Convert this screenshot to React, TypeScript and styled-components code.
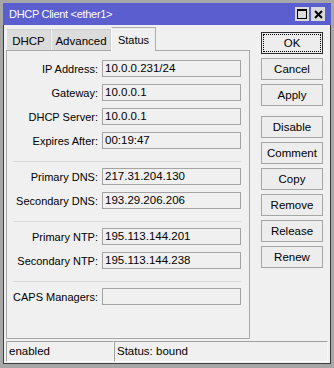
import * as React from 'react';
import styled, { createGlobalStyle } from 'styled-components';

const GlobalStyle = createGlobalStyle`
	html, body {
		margin: 0;
		padding: 0;
		background: #a7a7a7;
	}
	body {
		font-family: "Liberation Sans", Arial, sans-serif;
		font-size: 11px;
		color: #000;
	}
	#root {
		width: 334px;
		height: 368px;
		padding: 3px;
		box-sizing: border-box;
	}
`;

const Window = styled.div`
	width: 328px;
	height: 361px;
	box-sizing: border-box;
	background: #f0f0f0;
	border: 1px solid #3d3d3d;
	border-top: none;
	display: flex;
	flex-direction: column;
`;

const TitleBar = styled.div`
	flex: none;
	height: 22px;
	margin: 0 -1px;
	padding: 0 6px;
	background: #5a5ecf;
	color: #fff;
	display: flex;
	align-items: center;
`;

const Title = styled.div`
	flex: 1;
	font-size: 11px;
	letter-spacing: -0.3px;
`;

const TitleButtons = styled.div`
	display: flex;
	gap: 2px;
`;

const TitleButton = styled.div`
	width: 14px;
	height: 14px;
	background: #dadada;
	display: flex;
	align-items: center;
	justify-content: center;
`;

const Main = styled.div`
	flex: none;
	height: 314px;
	box-sizing: border-box;
	padding: 2px 0 0 2px;
	display: flex;
`;

const LeftColumn = styled.div`
	width: 244px;
	display: flex;
	flex-direction: column;
`;

const TabStrip = styled.div`
	height: 24px;
	margin-bottom: -1px;
	display: flex;
	align-items: flex-end;
	position: relative;
	z-index: 1;
`;

const Tab = styled.div<{ $active?: boolean; $w: number }>`
	width: ${p => p.$w}px;
	box-sizing: border-box;
	height: ${p => (p.$active ? 24 : 21)}px;
	margin-bottom: ${p => (p.$active ? 0 : 1)}px;
	display: flex;
	align-items: center;
	justify-content: center;
	padding-top: ${p => (p.$active ? 0 : 1)}px;
	font-size: ${p => (p.$active ? 11 : 11.5)}px;
	background: ${p => (p.$active ? '#f0f0f0' : '#dcdcdc')};
	border: 1px solid ${p => (p.$active ? '#adadad' : '#d0d0d0')};
	border-bottom: none;
	border-left-color: ${p => (p.$active ? '#ffffff' : '#f4f4f4')};
`;

const Panel = styled.div`
	height: 289px;
	box-sizing: border-box;
	border: 1px solid #a9a9a9;
	padding-top: 9px;
`;

const Group = styled.div`
	display: flex;
	flex-direction: column;
	gap: 7px;
`;

const Separator = styled.div`
	height: 1px;
	margin: 12px 0 6px 6px;
	width: 228px;
	background: #d9d9d9;
`;

const Row = styled.div`
	display: flex;
	align-items: center;
	height: 17px;
`;

const Label = styled.div`
	width: 91px;
	padding-right: 4px;
	text-align: right;
	white-space: nowrap;
`;

const Field = styled.div`
	width: 139px;
	height: 17px;
	box-sizing: border-box;
	border: 1px solid #a3a3a3;
	background: #f0f0f0;
	padding-left: 2px;
	line-height: 15px;
	font-size: 11.5px;
	white-space: nowrap;
`;

const ButtonColumn = styled.div`
	margin: 5px 0 0 11px;
	display: flex;
	flex-direction: column;
	gap: 4px;
`;

const Button = styled.div<{ $default?: boolean; $gapBefore?: boolean }>`
	position: relative;
	width: 62px;
	height: 22px;
	box-sizing: border-box;
	margin-top: ${p => (p.$gapBefore ? 6 : 0)}px;
	border: 1px solid ${p => (p.$default ? '#2f2f2f' : '#a6a6a6')};
	background: #ededed;
	display: flex;
	align-items: center;
	justify-content: center;
	font-size: 11.5px;

	${p =>
		p.$default &&
		`&::after {
			content: '';
			position: absolute;
			inset: 1px;
			border: 1px dotted #000;
		}`}
`;

const StatusBar = styled.div`
	flex: none;
	height: 21px;
	margin: 2px 2px 1px 2px;
	display: flex;
`;

const StatusCell = styled.div<{ $w?: number }>`
	${p => (p.$w ? `width: ${p.$w}px;` : 'flex: 1;')}
	box-sizing: border-box;
	border-top: 1px solid #a0a0a0;
	border-left: 1px solid #a0a0a0;
	border-right: 1px solid #fafafa;
	border-bottom: 1px solid #fafafa;
	padding-left: 2px;
	line-height: 19px;
	font-size: 11.5px;
`;

const groups = [
	[
		['IP Address:', '10.0.0.231/24'],
		['Gateway:', '10.0.0.1'],
		['DHCP Server:', '10.0.0.1'],
		['Expires After:', '00:19:47']
	],
	[
		['Primary DNS:', '217.31.204.130'],
		['Secondary DNS:', '193.29.206.206']
	],
	[
		['Primary NTP:', '195.113.144.201'],
		['Secondary NTP:', '195.113.144.238']
	],
	[['CAPS Managers:', '']]
];

const buttons = ['OK', 'Cancel', 'Apply', 'Disable', 'Comment', 'Copy', 'Remove', 'Release', 'Renew'];

const App = () => (
	<>
		<GlobalStyle />
		<Window>
			<TitleBar>
				<Title>DHCP Client &lt;ether1&gt;</Title>
				<TitleButtons>
					<TitleButton>
						<svg width="10" height="10" viewBox="0 0 10 10">
							<rect x="0.5" y="0.5" width="9" height="9" fill="none" stroke="#000" />
							<rect x="0" y="0" width="10" height="2" fill="#000" />
						</svg>
					</TitleButton>
					<TitleButton>
						<svg width="9" height="9" viewBox="0 0 9 9">
							<path d="M1 1 L8 8 M8 1 L1 8" stroke="#000" strokeWidth="2" />
						</svg>
					</TitleButton>
				</TitleButtons>
			</TitleBar>
			<Main>
				<LeftColumn>
					<TabStrip>
						<Tab $w={45}>DHCP</Tab>
						<Tab $w={60}>Advanced</Tab>
						<Tab $w={45} $active>Status</Tab>
					</TabStrip>
					<Panel>
						{groups.map((g, gi) => (
							<React.Fragment key={gi}>
								{gi > 0 && <Separator />}
								<Group>
									{g.map(([label, value]) => (
										<Row key={label}>
											<Label>{label}</Label>
											<Field>{value}</Field>
										</Row>
									))}
								</Group>
							</React.Fragment>
						))}
					</Panel>
				</LeftColumn>
				<ButtonColumn>
					{buttons.map((b, i) => (
						<Button key={b} $default={i === 0} $gapBefore={b === 'Disable'}>
							{b}
						</Button>
					))}
				</ButtonColumn>
			</Main>
			<StatusBar>
				<StatusCell $w={108}>enabled</StatusCell>
				<StatusCell>Status: bound</StatusCell>
			</StatusBar>
		</Window>
	</>
);

export default App;
